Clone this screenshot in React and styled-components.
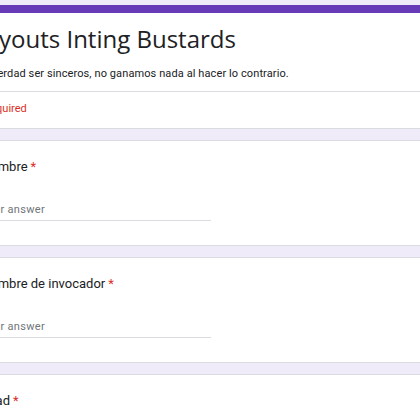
import React from "react";
import styled, { createGlobalStyle } from "styled-components";

const GlobalStyle = createGlobalStyle`
  html, body {
    margin: 0;
    padding: 0;
    background: #f0ebf8;
    overflow: hidden;
  }
  body {
    font-family: Roboto, "Liberation Sans", Arial, sans-serif;
    color: #202124;
  }
`;

// the shot is cropped: the left part of the form sits outside the window
const Page = styled.div`
  width: 420px;
  height: 420px;
  overflow: hidden;
  padding-top: 5px;
  box-sizing: border-box;
`;

const Column = styled.div`
  margin-left: -40px;
  width: 520px;
  display: flex;
  flex-direction: column;
  gap: 11px;
`;

const Card = styled.div`
  background: #fff;
  border: 1px solid #dadce0;
  border-radius: 8px;
  box-sizing: border-box;
  padding: 17px 24px 0 20px;
  height: 106px;
`;

const HeaderCard = styled(Card)`
  border-top: 8px solid #673ab7;
  padding: 10px 24px 0 15px;
  height: 124px;
`;

const Title = styled.div`
  font-family: "Open Sans", Roboto, sans-serif;
  font-size: 24px;
  line-height: 32px;
  color: #202124;
`;

const Description = styled.div`
  margin-top: 11px;
  font-size: 11px;
  line-height: 16px;
  letter-spacing: 0.1px;
  color: #202124;
`;

const Divider = styled.div`
  height: 1px;
  background: #dadce0;
  margin: 9px -24px 0 -15px;
`;

const Required = styled.div`
  margin-top: 9px;
  font-size: 11px;
  line-height: 16px;
  color: #d93025;
`;

const Label = styled.div`
  font-size: 13px;
  line-height: 18px;
  color: #202124;
`;

const Star = styled.span`
  color: #d93025;
  margin-left: 3px;
`;

const Answer = styled.div`
  margin-top: 26px;
  width: 230px;
  height: 18px;
  font-size: 11px;
  line-height: 16px;
  color: #70757a;
  letter-spacing: 0.3px;
  border-bottom: 1px solid #dadce0;
`;

const Question = ({ label }) => (
  <Card>
    <Label>
      {label}
      <Star>*</Star>
    </Label>
    <Answer>Your answer</Answer>
  </Card>
);

export default function App() {
  return (
    <Page>
      <GlobalStyle />
      <Column>
        <HeaderCard>
          <Title>Tryouts Inting Bustards</Title>
          <Description>
            De verdad ser sinceros, no ganamos nada al hacer lo contrario.
          </Description>
          <Divider />
          <Required>* Required</Required>
        </HeaderCard>
        <Question label="Nombre" />
        <Question label="Nombre de invocador" />
        <Question label="Edad" />
      </Column>
    </Page>
  );
}
